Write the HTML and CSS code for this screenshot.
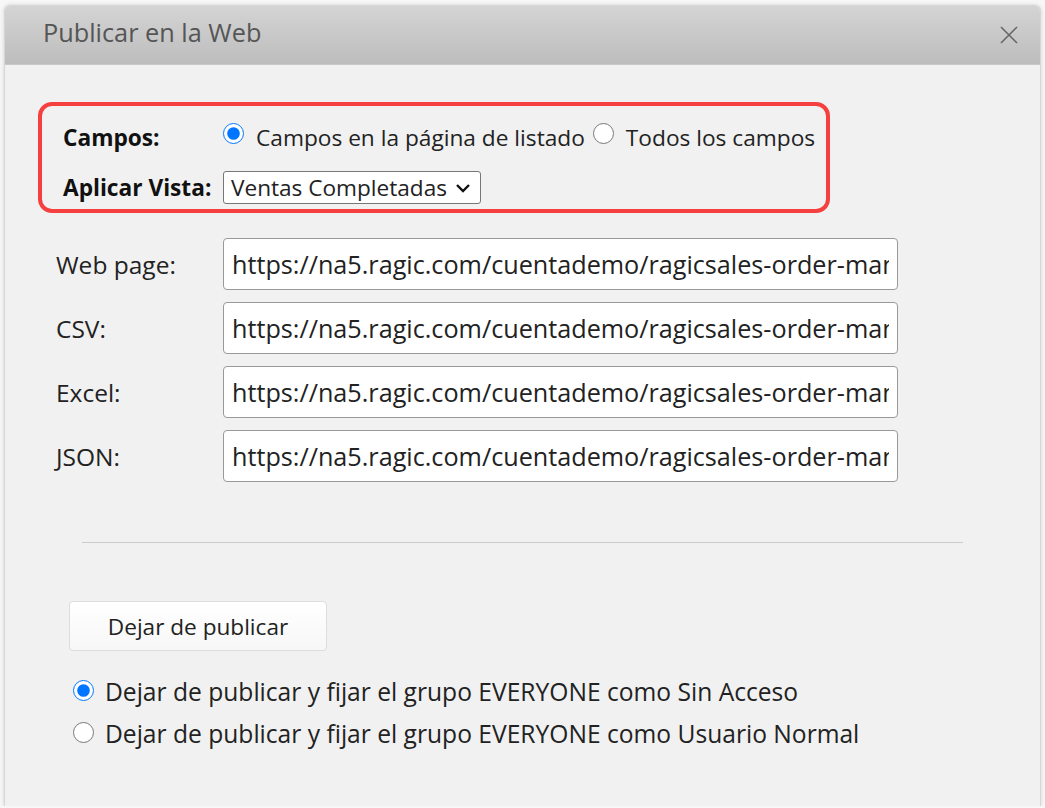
FILE: index.html
```html
<!DOCTYPE html>
<html lang="es">
<head>
<meta charset="UTF-8">
<meta name="viewport" content="width=device-width, initial-scale=1.0">
<title>Publicar en la Web</title>
<link rel="stylesheet" href="styles.css">
</head>
<body>

  <div class="dialog">
    <div class="dialog-head">
      <h1>Publicar en la Web</h1>
      <button class="close" title="Cerrar">
        <svg width="18" height="18" viewBox="0 0 18 18"><path d="M1 1 L17 17 M17 1 L1 17" stroke="#666" stroke-width="1.6" fill="none"/></svg>
      </button>
    </div>

    <div class="dialog-body">
      <div class="view-box">
        <label class="field-label">Campos:</label>
        <div class="choice-row">
          <label class="radio"><input type="radio" name="campos" checked> Campos en la página de listado</label>
          <label class="radio"><input type="radio" name="campos"> Todos los campos</label>
        </div>
        <label class="field-label" for="vista">Aplicar Vista:</label>
        <div>
          <span class="select-wrap">
            <select id="vista">
              <option>Ventas Completadas</option>
              <option>Todas las ventas</option>
            </select>
            <svg class="chevron" width="16" height="10" viewBox="0 0 16 10"><path d="M2 2 L8 8 L14 2" stroke="#111" stroke-width="2.4" fill="none"/></svg>
          </span>
        </div>
      </div>

      <div class="links">
        <label for="url-web">Web page:</label>
        <input type="text" id="url-web" readonly value="https://na5.ragic.com/cuentademo/ragicsales-order-management/1">
        <label for="url-csv">CSV:</label>
        <input type="text" id="url-csv" readonly value="https://na5.ragic.com/cuentademo/ragicsales-order-management/1.csv">
        <label for="url-xls">Excel:</label>
        <input type="text" id="url-xls" readonly value="https://na5.ragic.com/cuentademo/ragicsales-order-management/1.xlsx">
        <label for="url-json">JSON:</label>
        <input type="text" id="url-json" readonly value="https://na5.ragic.com/cuentademo/ragicsales-order-management/1.json">
      </div>

      <hr>

      <div class="unpublish">
        <button class="btn">Dejar de publicar</button>
        <label class="radio"><input type="radio" name="modo" checked> Dejar de publicar y fijar el grupo EVERYONE como Sin Acceso</label>
        <label class="radio"><input type="radio" name="modo"> Dejar de publicar y fijar el grupo EVERYONE como Usuario Normal</label>
      </div>
    </div>
  </div>

</body>
</html>
```

FILE: styles.css
```css
body {
  margin: 0;
  background-color: #f7f7f7;
  font-family: "Open Sans", "Liberation Sans", sans-serif;
  color: #222;
}
.dialog {
  margin: 5px 4px 0;
  height: 801px;
  box-sizing: border-box;
  background-color: #f1f1f1;
  border: 1px solid #d6d6d6;
  border-bottom: none;
  border-radius: 6px 6px 0 0;
  box-shadow: 0 0 4px rgba(0,0,0,0.15);
  overflow: hidden;
}
.dialog-head {
  height: 58px;
  display: flex;
  align-items: center;
  justify-content: space-between;
  padding: 0 22px 0 38px;
  background: linear-gradient(#d4d4d4, #bdbdbd);
  border-bottom: 1px solid #c8c8c8;
}
.dialog-head h1 {
  margin: 0 0 6px;
  font-size: 25.3px;
  font-weight: normal;
  color: #555;
}
.close {
  border: none;
  background: none;
  padding: 0;
  display: flex;
  cursor: pointer;
}
.dialog-body {
  padding: 37px 0 0;
}

/* caja de campos y vista */
.view-box {
  margin-left: 33px;
  width: 792px;
  height: 111px;
  box-sizing: border-box;
  border: 4px solid #f6403f;
  border-radius: 14px;
  padding: 6px 0 0 21px;
  display: grid;
  grid-template-columns: 160px 1fr;
  grid-auto-rows: 50px;
  align-items: center;
}
.field-label {
  font-weight: bold;
  font-size: 22.7px;
  color: #111;
}
.choice-row {
  display: flex;
  gap: 8px;
}
.radio {
  display: flex;
  align-items: center;
  font-size: 22.7px;
  color: #222;
  white-space: nowrap;
}
.radio input {
  width: 21px;
  height: 21px;
  margin: 0 12px 8px 0;
}
.select-wrap {
  position: relative;
  display: inline-block;
}
select {
  appearance: none;
  width: 258px;
  height: 33px;
  padding: 0 30px 0 7px;
  font-family: inherit;
  font-size: 22.6px;
  color: #222;
  background-color: #fff;
  border: 1px solid #777;
  border-radius: 3px;
  vertical-align: middle;
}
.chevron {
  position: absolute;
  right: 10px;
  top: 12px;
  pointer-events: none;
}

/* enlaces publicados */
.links {
  margin: 25px 0 0 51px;
  display: grid;
  grid-template-columns: 167px 675px;
  grid-auto-rows: 52px;
  row-gap: 12px;
  align-items: center;
}
.links label {
  font-size: 24.5px;
  color: #222;
}
.links input {
  height: 52px;
  box-sizing: border-box;
  padding: 0 8px;
  font-family: inherit;
  font-size: 25.2px;
  color: #222;
  background-color: #fff;
  border: 1px solid #999;
  border-radius: 4px;
}
hr {
  margin: 60px 0 0 77px;
  width: 881px;
  border: none;
  border-top: 1px solid #ccc;
}
.unpublish {
  margin: 58px 0 0 64px;
  display: flex;
  flex-direction: column;
  align-items: flex-start;
}
.btn {
  width: 258px;
  height: 50px;
  margin-bottom: 19px;
  font-family: inherit;
  font-size: 22.6px;
  color: #222;
  background: linear-gradient(#fff, #f7f7f7);
  border: 1px solid #ddd;
  border-radius: 4px;
  cursor: pointer;
}
.unpublish .radio {
  height: 42px;
  margin-left: 4px;
  font-size: 24.6px;
}
.unpublish .radio input {
  margin: 0 11px 2px 0;
}
```
